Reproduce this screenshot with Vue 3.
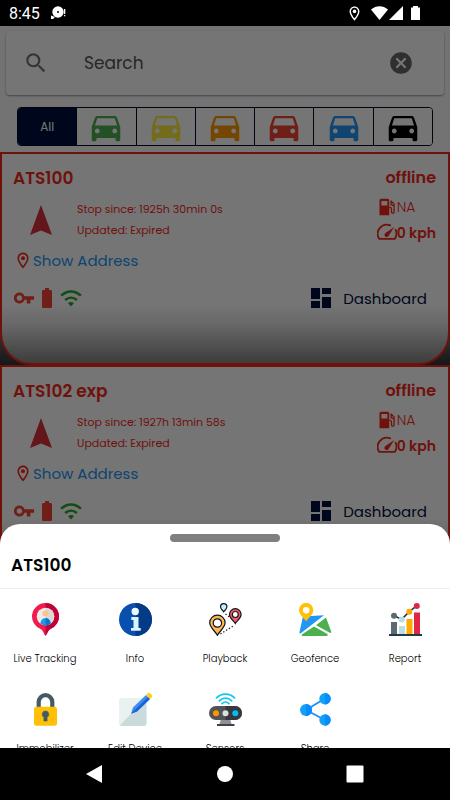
<template>
  <div class="screen">
    <!-- shared icon shapes -->
    <svg class="sprite" aria-hidden="true">
      <symbol id="search" viewBox="0 0 24 24">
        <path d="M15.5 14h-.79l-.28-.27A6.47 6.47 0 0 0 16 9.5 6.5 6.5 0 1 0 9.5 16c1.61 0 3.09-.59 4.23-1.57l.27.28v.79l5 4.99L20.49 19l-4.99-5zm-6 0C7.01 14 5 11.99 5 9.5S7.01 5 9.5 5 14 7.01 14 9.5 11.99 14 9.5 14z" />
      </symbol>
      <symbol id="cancel" viewBox="0 0 24 24">
        <path d="M12 2C6.47 2 2 6.47 2 12s4.47 10 10 10 10-4.47 10-10S17.53 2 12 2zm5 13.59L15.59 17 12 13.41 8.41 17 7 15.59 10.59 12 7 8.41 8.41 7 12 10.59 15.59 7 17 8.41 13.41 12 17 15.59z" />
      </symbol>
      <symbol id="car" viewBox="0 0 24 24">
        <path d="M18.92 6.01C18.72 5.42 18.16 5 17.5 5h-11c-.66 0-1.21.42-1.42 1.01L3 12v8c0 .55.45 1 1 1h1c.55 0 1-.45 1-1v-1h12v1c0 .55.45 1 1 1h1c.55 0 1-.45 1-1v-8l-2.08-5.99zM6.5 16c-.83 0-1.5-.67-1.5-1.5S5.67 13 6.5 13s1.5.67 1.5 1.5S7.33 16 6.5 16zm11 0c-.83 0-1.5-.67-1.5-1.5s.67-1.5 1.5-1.5 1.5.67 1.5 1.5-.67 1.5-1.5 1.5zM5 11l1.5-4.5h11L19 11H5z" />
      </symbol>
      <symbol id="place" viewBox="0 0 24 24">
        <path d="M12 2C8.13 2 5 5.13 5 9c0 5.25 7 13 7 13s7-7.75 7-13c0-3.87-3.13-7-7-7zM7 9c0-2.76 2.24-5 5-5s5 2.24 5 5c0 2.88-2.88 7.19-5 9.88C9.92 16.21 7 11.85 7 9z" />
        <circle cx="12" cy="9" r="2.5" />
      </symbol>
      <symbol id="key" viewBox="0 0 24 24">
        <path d="M21 10h-8.35C11.83 7.67 9.61 6 7 6c-3.31 0-6 2.69-6 6s2.69 6 6 6c2.61 0 4.83-1.67 5.65-4H15v4h4v-4h4v-4h-2zM7 15c-1.65 0-3-1.35-3-3s1.35-3 3-3 3 1.35 3 3-1.35 3-3 3z" />
      </symbol>
      <symbol id="battery" viewBox="0 0 24 24">
        <path d="M15.67 4H14V2h-4v2H8.33C7.6 4 7 4.6 7 5.33v15.33C7 21.4 7.6 22 8.33 22h7.33c.74 0 1.34-.6 1.34-1.33V5.33C17 4.6 16.4 4 15.67 4z" />
      </symbol>
      <symbol id="wifi" viewBox="0 0 24 24">
        <g fill="none" stroke="currentColor" stroke-width="2.8">
          <path d="M1.200 9.400C8 3.600 16 3.600 22.800 9.400" />
          <path d="M5.600 14.200c3.800-3.400 9-3.400 12.800 0" />
        </g>
        <path d="M8.800 17.600c2-1.600 4.400-1.600 6.400 0L12 21.200z" />
      </symbol>
      <symbol id="fuel" viewBox="0 0 24 24">
        <path fill-rule="evenodd" d="M4 1h9a2 2 0 0 1 2 2v20H2V3a2 2 0 0 1 2-2zm.500 3v6h8V4z" />
        <path d="M15 12.500h1a2 2 0 0 1 2 2v4a1.700 1.700 0 0 0 3.400 0V8L17 3.500M17.500 4.500v4.500l4 1.500" fill="none" stroke="currentColor" stroke-width="1.700" />
      </symbol>
      <symbol id="speed" viewBox="1 2 22 22">
        <path d="M15.500 4.600A10 10 0 0 0 3.500 19.500h17A10 10 0 0 0 21.500 9.500" fill="none" stroke="currentColor" stroke-width="2" stroke-linecap="round" stroke-linejoin="round" />
        <path d="M20 6.500l-6.300 9.800a2.400 2.400 0 1 1-3.400-3.200z" />
      </symbol>
      <symbol id="dashboard" viewBox="0 0 24 24">
        <path d="M2 2h9v11H2zM13 2h9v6h-9zM2 15h9v7H2zM13 11h9v11h-9z" />
      </symbol>
      <symbol id="heading" viewBox="0 0 24 32">
        <path d="M12 1l11 30-11-4.500L1 31z" />
      </symbol>

      <symbol id="tracking" viewBox="0 0 33 33">
        <path d="M16.500 0A13.500 13.500 0 0 0 12 26.230c2 1 2.800 4.770 4.500 6.770 1.700-2 2.500-5.770 4.500-6.770A13.500 13.500 0 0 0 16.500 0z" fill="#f01c50" />
        <path d="M16.500 0a13.500 13.500 0 0 1 4.500 26.230c-2 1-2.800 4.770-4.500 6.770z" fill="#be0238" />
        <circle cx="16.500" cy="13.500" r="8.800" fill="#f0ebe8" />
        <path d="M16.500 4.700a8.800 8.800 0 0 1 0 17.600z" fill="#dfd7d3" />
        <circle cx="16.500" cy="10.500" r="3" fill="#fbc392" />
        <path d="M11.500 20.700C11.500 17.300 13.500 15.300 16.500 15.300s5 2 5 5.400a8.800 8.800 0 0 1-10 0z" fill="#2196e8" />
        <path d="M16.500 15.300c3 0 5 2 5 5.400a8.800 8.800 0 0 1-5 1.600z" fill="#0877cf" />
      </symbol>
      <symbol id="info" viewBox="0 0 33 33">
        <circle cx="16.500" cy="16.500" r="16.500" fill="#0950ae" />
        <path d="M16.500 0a16.500 16.500 0 0 1 0 33z" fill="#043b86" />
        <circle cx="16.200" cy="8.500" r="3.700" fill="#eafaff" />
        <path d="M12.300 14h7.200v11h2.200v2.800H12V25h2.500v-8h-2.200z" fill="#d9f4ff" />
      </symbol>
      <symbol id="playback" viewBox="0 0 33 33">
        <g stroke="#10151b" stroke-width="1.200">
          <path d="M8.400 32.300C6.500 28.500.7 24.500.7 19.800a7.700 7.700 0 0 1 15.400 0c0 4.700-5.800 8.700-7.700 12.500z" fill="#ffb655" />
          <circle cx="8.400" cy="20" r="4.200" fill="#fff" />
          <path d="M26.300 20.500c-1.500-2.800-5.800-5-5.800-9a5.800 5.800 0 0 1 11.600 0c0 4-4.300 6.200-5.800 9z" fill="#f45b62" />
          <circle cx="26.300" cy="11.500" r="3" fill="#fff" />
          <path d="M14.700 8.800c-1-1.700-3.200-2.600-3.200-5a3.200 3.200 0 0 1 6.400 0c0 2.400-2.200 3.300-3.200 5z" fill="#c7efff" />
        </g>
        <path d="M11.500 31L25 22.500M16.500 11l4 3" fill="none" stroke="#10151b" stroke-width="1.300" stroke-dasharray="1.300 2" />
      </symbol>
      <symbol id="geofence" viewBox="0 0 33 33">
        <path d="M4 13.500L25 12.200 1.500 30.500c-.8 0-1.200-.5-1-1.500z" fill="#2196f3" />
        <path d="M27 14.500l5.200 14c.2 1.200-.5 1.800-1.400 1.300L17 22.200z" fill="#4caf50" />
        <path d="M15 23.600L28.500 31c.5 1.200 0 2-1 2H3.500c-1 0-1.200-1-.3-1.700z" fill="#4caf50" />
        <path d="M7.200 18.500C5.500 15 0 12 0 7a7.100 7.100 0 0 1 14.300 0c0 5-5.400 8-7.100 11.500z" fill="#ffc107" />
        <circle cx="7.200" cy="7.200" r="3.200" fill="#fff" />
      </symbol>
      <symbol id="report" viewBox="0 0 33 33">
        <path d="M2 19h6v12H2z" fill="#5c6b73" />
        <path d="M10 23h6v8h-6z" fill="#bcdde2" />
        <path d="M17.500 16h6v15h-6z" fill="#ffa800" />
        <path d="M25 9.500h6V31h-6z" fill="#e02545" />
        <path d="M0 31h33v2H0z" fill="#263a46" />
        <path d="M5 12.700l7.700 3.600 7.600-7.600 7.500-6" fill="none" stroke="#263a46" stroke-width="1.600" />
        <circle cx="5" cy="12.700" r="3" fill="#5c6b73" />
        <circle cx="12.700" cy="16.500" r="3" fill="#bcdde2" />
        <circle cx="20.300" cy="8.700" r="3" fill="#ffa800" />
        <circle cx="27.800" cy="3" r="3" fill="#e02545" />
      </symbol>
      <symbol id="lock" viewBox="0 0 33 33">
        <path d="M9.700 15V9a6.800 6.800 0 0 1 13.600 0v6" fill="none" stroke="#455a64" stroke-width="4.200" />
        <rect x="5" y="13.800" width="23" height="19" rx="2.500" fill="#ffc107" />
        <path d="M16.500 18a3.300 3.300 0 0 0-1.600 6.200V28h3.200v-3.800a3.300 3.300 0 0 0-1.600-6.200z" fill="#455a64" stroke="#455a64" stroke-width=".6" />
      </symbol>
      <symbol id="edit" viewBox="0 0 33 33">
        <rect x="0" y="5" width="27.500" height="28" rx="2.800" fill="#e9f1f1" />
        <path d="M1 32L27.500 5.500V30a3 3 0 0 1-3 3h-22z" fill="#cadbdb" />
        <path d="M12 20.800l2-6.300L27 2l4 4-13 12.600z" fill="#3f8cf4" />
        <path d="M12 20.800l4.300-4.300L29 4l2 2-13 12.600z" fill="#1762d8" />
        <path d="M27 2l1.500-1.500a2 2 0 0 1 2.800 0l1.200 1.200a2 2 0 0 1 0 2.800L31 6z" fill="#ffd016" />
      </symbol>
      <symbol id="sensors" viewBox="0 0 33 33">
        <g fill="none" stroke="#14c6ec" stroke-width="1.800" stroke-linecap="round">
          <path d="M7.500 4.800c5-5 13-5 18 0" />
          <path d="M10.300 7.800c3.500-3.500 8.900-3.500 12.400 0" />
          <path d="M13 10.600c2-2 5-2 7 0" />
        </g>
        <path d="M12 26h9l1.500 5h-12z" fill="#8c9196" />
        <rect x="8" y="31" width="17.500" height="2" fill="#404348" />
        <rect x="0" y="13" width="33" height="14" rx="7" fill="#505357" />
        <path d="M16.500 13H26a7 7 0 0 1 0 14h-9.500z" fill="#36383d" />
        <circle cx="7" cy="20.200" r="3" fill="#ff9500" />
        <circle cx="16.500" cy="20.200" r="3" fill="#dedede" />
        <circle cx="26.300" cy="20.200" r="3" fill="#00bdf2" />
      </symbol>
      <symbol id="share" viewBox="0 0 33 33">
        <path d="M26 5.500L7 17l19 10" fill="none" stroke="#188ffc" stroke-width="1.800" />
        <g fill="#14a1f4">
          <circle cx="7" cy="17" r="6" />
          <circle cx="26" cy="5.700" r="5.700" />
          <circle cx="26" cy="27" r="5.700" />
        </g>
        <path d="M7 11a6 6 0 0 1 0 12zM26 0a5.700 5.700 0 0 1 0 11.400zM26 21.300a5.700 5.700 0 0 1 0 11.400z" fill="#078bff" />
      </symbol>
    </svg>

    <header class="status-bar">
      <span class="clock">8:45</span>
      <svg class="disc" viewBox="0 0 16 14">
        <circle cx="8" cy="6" r="5.700" />
        <path d="M1 13V9.500L5 11l-2 2z" />
        <path d="M14 3h1.300v5H14zM14 9h1.300v1.300H14z" />
        <circle cx="8" cy="6" r="1" fill="#000" />
      </svg>
      <span class="spacer"></span>
      <svg class="status-pin" viewBox="0 0 24 24"><use href="#place" /></svg>
      <svg class="signal" viewBox="0 0 49 14">
        <path d="M0 3.500C5-1 12-1 17 3.500L8.500 14z" />
        <path d="M32 0v14H18z" />
        <path d="M40 1.500h2V0h5v1.500h2V14h-9z" />
      </svg>
    </header>

    <main class="content">
      <form class="search" @submit.prevent>
        <svg class="search-icon"><use href="#search" /></svg>
        <input v-model="query" type="text" placeholder="Search" aria-label="Search" />
        <button type="button" class="clear" aria-label="Clear" @click="query = ''">
          <svg><use href="#cancel" /></svg>
        </button>
      </form>

      <div class="filters">
        <button
          v-for="filter in filters"
          :key="filter"
          type="button"
          :class="['filter', filter, { active: filter === activeFilter }]"
          :aria-label="filter"
          @click="activeFilter = filter"
        >
          <span v-if="filter === 'all'">All</span>
          <svg v-else><use href="#car" /></svg>
        </button>
      </div>

      <div v-for="device in devices" :key="device.name" class="card-back">
        <article class="card">
          <div class="card-head">
            <h2>{{ device.name }}</h2>
            <strong>offline</strong>
          </div>
          <div class="card-body">
            <svg class="heading"><use href="#heading" /></svg>
            <div class="times">
              <p>Stop since: {{ device.stopped }}</p>
              <p>Updated: Expired</p>
            </div>
            <div class="readings">
              <p><svg><use href="#fuel" /></svg>NA</p>
              <p class="speed"><svg><use href="#speed" /></svg>0 kph</p>
            </div>
          </div>
          <a class="address" href="#">
            <svg><use href="#place" /></svg>Show Address
          </a>
          <div class="card-foot">
            <svg class="key"><use href="#key" /></svg>
            <svg class="battery"><use href="#battery" /></svg>
            <svg class="wifi"><use href="#wifi" /></svg>
            <a class="dashboard" href="#">
              <svg><use href="#dashboard" /></svg>Dashboard
            </a>
          </div>
        </article>
      </div>

      <div class="scrim"></div>

      <section class="sheet">
        <div class="handle"></div>
        <h2 class="sheet-title">ATS100</h2>
        <div class="actions">
          <button v-for="action in actions" :key="action.icon" type="button" class="action">
            <svg><use :href="'#' + action.icon" /></svg>
            <span>{{ action.label }}</span>
          </button>
        </div>
      </section>
    </main>

    <nav class="nav-bar">
      <button type="button" aria-label="Back">
        <svg viewBox="0 0 18 18"><path d="M0 9L16 0v18z" /></svg>
      </button>
      <button type="button" aria-label="Home">
        <svg viewBox="0 0 18 18"><circle cx="9" cy="9" r="8" /></svg>
      </button>
      <button type="button" aria-label="Recents">
        <svg viewBox="0 0 18 18"><rect x=".5" y=".5" width="17" height="17" rx="1" /></svg>
      </button>
    </nav>
  </div>
</template>

<script setup>
import { ref } from 'vue';

const query = ref('');
const activeFilter = ref('all');

const filters = ['all', 'green', 'yellow', 'orange', 'red', 'blue', 'black'];

const devices = [
  { name: 'ATS100', stopped: '1925h 30min 0s' },
  { name: 'ATS102 exp', stopped: '1927h 13min 58s' }
];

const actions = [
  { icon: 'tracking', label: 'Live Tracking' },
  { icon: 'info', label: 'Info' },
  { icon: 'playback', label: 'Playback' },
  { icon: 'geofence', label: 'Geofence' },
  { icon: 'report', label: 'Report' },
  { icon: 'lock', label: 'Immobilizer' },
  { icon: 'edit', label: 'Edit Device' },
  { icon: 'sensors', label: 'Sensors' },
  { icon: 'share', label: 'Share' }
];
</script>

<style>
body {
  margin: 0;
}
</style>

<style scoped>
.screen {
  display: flex;
  flex-direction: column;
  height: 100vh;
  background: #000;
  font-family: Poppins, Inter, sans-serif;
}

.screen * {
  box-sizing: border-box;
}

svg {
  display: block;
  flex-shrink: 0;
  fill: currentColor;
}

.sprite {
  display: none;
}

h2,
p {
  margin: 0;
}

a {
  text-decoration: none;
}

button {
  display: flex;
  align-items: center;
  justify-content: center;
  padding: 0;
  border: 0;
  background: none;
  color: inherit;
  font: inherit;
}

.status-bar {
  display: flex;
  align-items: center;
  height: 26px;
  padding: 0 30px 0 9px;
  color: #fff;
}

.clock {
  font: 16px Roboto, sans-serif;
}

.disc {
  width: 16px;
  height: 14px;
  margin-left: 10px;
}

.spacer {
  flex: 1;
}

.status-pin {
  width: 17px;
  height: 17px;
  margin-right: 8px;
}

.signal {
  width: 49px;
  height: 14px;
}

.content {
  position: relative;
  flex: 1;
  min-height: 0;
  overflow: hidden;
  background: #fafafa;
}

.search {
  display: flex;
  align-items: center;
  height: 64px;
  margin: 5px 6px 12px;
  padding: 0 30px 0 17px;
  border-radius: 4px;
  background: #fff;
  box-shadow: 0 1px 2px rgba(0, 0, 0, 0.4);
}

.search-icon {
  width: 26px;
  height: 26px;
  color: #757575;
}

.search input {
  flex: 1;
  min-width: 0;
  margin-left: 35px;
  padding: 0;
  border: 0;
  outline: 0;
  background: none;
  font: 17px Poppins, Inter, sans-serif;
}

.search input::placeholder {
  color: #555;
  opacity: 1;
}

.clear {
  color: #666;
}

.clear svg {
  width: 26px;
  height: 26px;
}

.filters {
  display: flex;
  height: 39px;
  margin: 0 17px 6px;
  border: 1px solid #000924;
  border-radius: 4px;
  overflow: hidden;
}

.filter {
  flex: 1;
  border-left: 1px solid #000924;
  background: #fff;
  font-size: 12px;
}

.filter:first-child {
  border-left: 0;
}

.filter svg {
  width: 38px;
  height: 38px;
}

.filter.active {
  background: #00103e;
  color: #fff;
}

.green { color: #4caf50; }
.yellow { color: #ffeb3b; }
.orange { color: #ff9800; }
.red { color: #f44336; }
.blue { color: #2196f3; }
.black { color: #000; }

.card-back {
  background: linear-gradient(#999 75%, #333);
}

.card {
  height: 213px;
  padding: 12px 12px 0 11px;
  border: 2px solid #f4281c;
  border-radius: 0 0 32px 32px;
  background: linear-gradient(#fff 72%, #e0e0e0 82%, #858585);
  color: #f4281c;
}

.card-head {
  display: flex;
  justify-content: space-between;
  font-size: 17px;
  line-height: 24px;
}

.card-head h2 {
  font-size: inherit;
  font-weight: 600;
}

.card-head strong {
  font-size: 16px;
  font-weight: 600;
}

.card-body {
  display: flex;
  height: 56px;
}

.heading {
  width: 24px;
  height: 32px;
  margin: 14px 24px 0 16px;
  color: #d9323c;
}

.times {
  flex: 1;
  padding-top: 9px;
  font-size: 11px;
  line-height: 21px;
}

.readings {
  padding-top: 4px;
  font-size: 14px;
  font-weight: 300;
  line-height: 26px;
}

.readings p {
  display: flex;
  align-items: center;
}

.readings svg {
  width: 18px;
  height: 18px;
  margin: 0 1px;
}

.readings .speed {
  font-weight: 600;
}

.readings .speed svg {
  width: 20px;
  height: 20px;
  margin: 0;
}

.address {
  display: flex;
  align-items: center;
  height: 28px;
  color: #2196f3;
  font-size: 15px;
}

.address svg {
  width: 20px;
  height: 19px;
  color: #f4281c;
}

.card-foot {
  display: flex;
  align-items: center;
  height: 24px;
  margin-top: 12px;
  color: #f44336;
}

.key,
.wifi {
  width: 22px;
  height: 22px;
}

.battery {
  width: 24px;
  height: 24px;
}

.wifi {
  margin-left: 1px;
  color: #2ba52e;
}

.dashboard {
  display: flex;
  align-items: center;
  gap: 10px;
  margin-left: auto;
  padding-right: 9px;
  color: #00103e;
  font-size: 15px;
}

.dashboard svg {
  width: 24px;
  height: 24px;
}

.scrim {
  position: absolute;
  inset: 0;
  background: rgba(0, 0, 0, 0.54);
}

.sheet {
  position: absolute;
  inset: auto 0 0;
  height: 28vh;
  padding-top: 10px;
  border-radius: 20px 20px 0 0;
  overflow: hidden;
  background: #fff;
  color: #000;
}

.handle {
  width: 110px;
  height: 8px;
  margin: 0 auto;
  border-radius: 4px;
  background: #808080;
}

.sheet-title {
  padding: 11px 11px;
  border-bottom: 1px solid #eee;
  font-size: 17px;
  font-weight: 600;
  line-height: 24px;
}

.actions {
  display: grid;
  grid-template-columns: repeat(5, 1fr);
  padding-top: 14px;
}

.action {
  flex-direction: column;
  justify-content: flex-start;
  height: 90px;
  gap: 15px;
  font-size: 10px;
  font-weight: 300;
  line-height: 16px;
}

.action svg {
  width: 33px;
  height: 33px;
}

.nav-bar {
  display: flex;
  height: 52px;
  padding: 0 30px;
  color: #fff;
}

.nav-bar button {
  flex: 1;
}

.nav-bar svg {
  width: 18px;
  height: 18px;
}
</style>
